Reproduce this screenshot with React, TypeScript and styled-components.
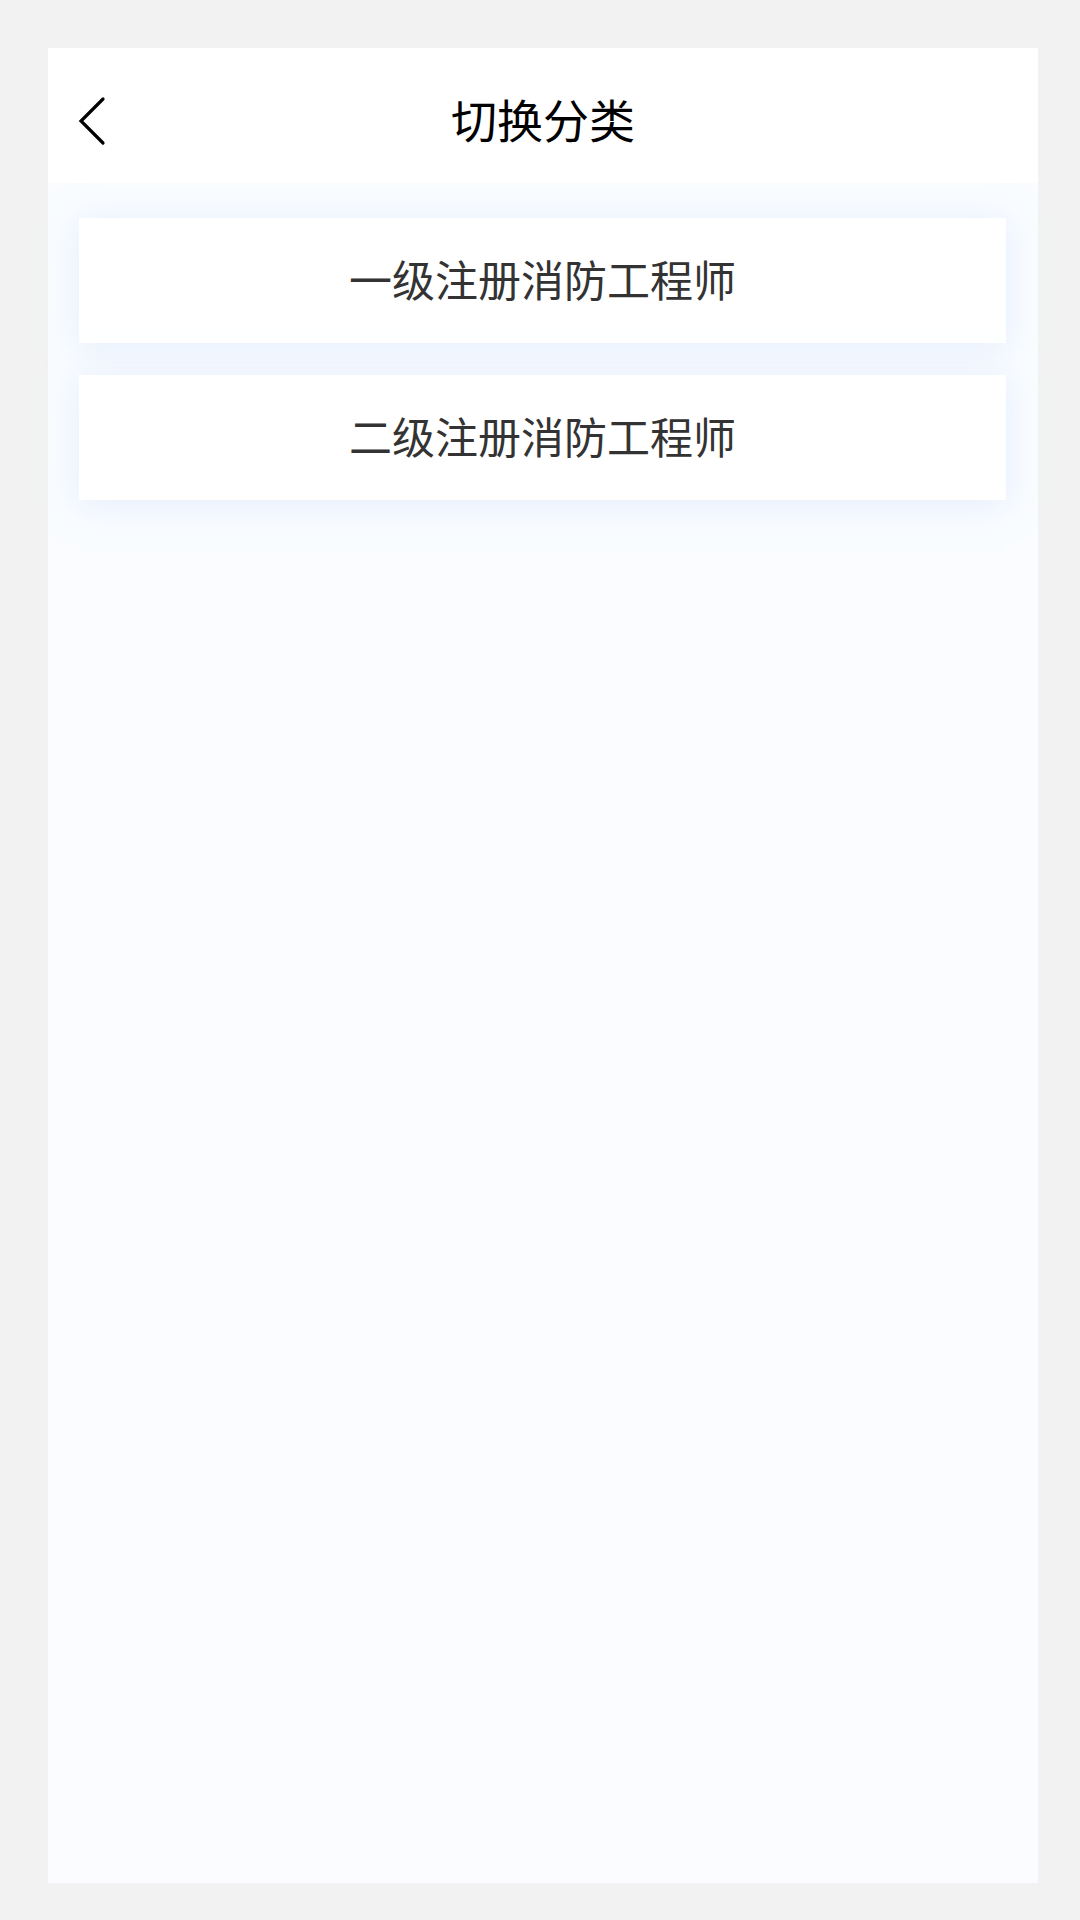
import React from "react";
import styled, { createGlobalStyle } from "styled-components";

const GlobalStyle = createGlobalStyle`
  html, body {
    margin: 0;
    padding: 0;
    background: #f2f2f2;
  }
  body {
    font-family: "Noto Sans CJK SC", "Noto Sans", sans-serif;
  }
`;

const Page = styled.div`
  width: 1080px;
  height: 1920px;
  box-sizing: border-box;
  padding: 48px 42px 37px 48px;
`;

const Frame = styled.div`
  height: 100%;
  display: flex;
  flex-direction: column;
  background: #fafcff;
`;

const Header = styled.div`
  height: 135px;
  flex-shrink: 0;
  background: #ffffff;
  display: flex;
  align-items: center;
  justify-content: center;
  position: relative;
`;

const BackButton = styled.button`
  position: absolute;
  left: 27px;
  top: 47px;
  width: 34px;
  height: 52px;
  padding: 0;
  border: none;
  background: transparent;
  display: flex;
  align-items: center;
  justify-content: center;
`;

const Title = styled.h1`
  margin: 0;
  padding-top: 4px;
  font-size: 46px;
  font-weight: 400;
  color: #000000;
  letter-spacing: 0;
`;

const List = styled.div`
  display: flex;
  flex-direction: column;
  gap: 32px;
  padding: 35px 32px 0 31px;
`;

const Card = styled.div`
  height: 125px;
  box-sizing: border-box;
  padding-bottom: 6px;
  background: #ffffff;
  display: flex;
  align-items: center;
  justify-content: center;
  box-shadow: 0 4px 32px rgba(212, 228, 252, 0.6);
  font-size: 43px;
  color: #333333;
`;

const categories = ["一级注册消防工程师", "二级注册消防工程师"];

export default function App() {
  return (
    <>
      <GlobalStyle />
      <Page>
        <Frame>
          <Header>
            <BackButton aria-label="返回">
              <svg width="30" height="50" viewBox="0 0 30 50">
                <path
                  d="M26 3 L4 25 L26 47"
                  fill="none"
                  stroke="#000"
                  strokeWidth="3.2"
                  strokeLinecap="round"
                  strokeLinejoin="miter"
                />
              </svg>
            </BackButton>
            <Title>切换分类</Title>
          </Header>
          <List>
            {categories.map((c) => (
              <Card key={c}>{c}</Card>
            ))}
          </List>
        </Frame>
      </Page>
    </>
  );
}
